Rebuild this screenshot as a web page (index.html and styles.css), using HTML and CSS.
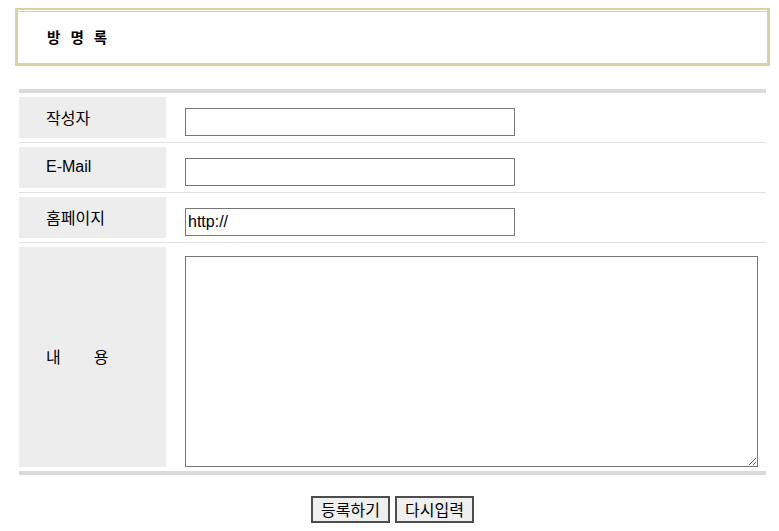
FILE: index.html
```html
<!DOCTYPE html>
<html lang="ko">
<head>
<meta charset="utf-8">
<title>방명록</title>
<link rel="stylesheet" href="styles.css">
</head>
<body>
<div class="header">
  <div class="header-in">
    <h1 class="title">방 명 록</h1>
  </div>
</div>
<form class="form">
  <div class="bar"></div>
  <div class="rows">
    <div class="row">
      <div class="label">작성자</div>
      <div class="field"><input class="text" type="text"></div>
    </div>
    <div class="sep"></div>
    <div class="row">
      <div class="label">E-Mail</div>
      <div class="field"><input class="text" type="text"></div>
    </div>
    <div class="sep"></div>
    <div class="row">
      <div class="label">홈페이지</div>
      <div class="field"><input class="text" type="text" value="http://"></div>
    </div>
    <div class="sep"></div>
    <div class="row row-tall">
      <div class="label"><span class="gap">내</span>용</div>
      <div class="field field-tall"><textarea class="area"></textarea></div>
    </div>
  </div>
  <div class="bar"></div>
  <div class="buttons">
    <button type="submit" class="btn">등록하기</button>
    <button type="reset" class="btn">다시입력</button>
  </div>
</form>
</body>
</html>
```
FILE: styles.css
```css
html, body {
  background: #fff;
}
body {
  margin: 8px;
  font-family: "Liberation Sans", "Noto Sans CJK KR", sans-serif;
  font-size: 16px;
  color: #000;
  overflow: hidden;
}
.header {
  margin: 0 1px 0 7px;
  height: 58px;
  box-sizing: border-box;
  border: 3px solid #d7d3a2;
  border-top-width: 2px;
}
.header-in {
  margin-top: 1px;
  border-top: 1px solid #d7d3a2;
  height: 51px;
  box-sizing: border-box;
  display: flex;
  align-items: center;
  padding-left: 29px;
  padding-bottom: 2px;
}
.title {
  margin: 0;
  font-family: "Noto Sans CJK KR", sans-serif;
  font-size: 14.5px;
  font-weight: bold;
  word-spacing: 6px;
  color: #000;
}
.form {
  margin: 23px 0 0 11px;
  width: 747px;
}
.bar {
  height: 4px;
  background: #dadada;
}
.rows {
  padding: 4px 0;
}
.row {
  display: flex;
  height: 41px;
}
.row-tall {
  height: 220px;
}
.sep {
  height: 1px;
  background: #e2e2e2;
  margin: 4px 0;
}
.label {
  width: 147px;
  box-sizing: border-box;
  background: #ededed;
  padding-left: 27px;
  display: flex;
  align-items: center;
  padding-bottom: 2px;
}
.gap {
  margin-right: 33px;
}
.field {
  padding-left: 19px;
  padding-top: 11px;
}
.field-tall {
  padding-top: 9px;
}
.text {
  width: 330px;
  height: 28px;
  box-sizing: border-box;
  border: 1px solid #767676;
  padding: 1px 2px;
  margin: 0;
  font-family: "Liberation Sans", "Noto Sans CJK KR", sans-serif;
  font-size: 16px;
}
.area {
  display: block;
  width: 573px;
  height: 211px;
  box-sizing: border-box;
  border: 1px solid #767676;
  margin: 0;
  padding: 2px;
  font-family: "Liberation Sans", "Noto Sans CJK KR", sans-serif;
  font-size: 16px;
}
.buttons {
  display: flex;
  justify-content: center;
  gap: 5px;
  margin-top: 21px;
}
.btn {
  width: 79px;
  height: 27px;
  box-sizing: border-box;
  border: 2px solid #4d4d4d;
  border-radius: 0;
  background: #efefef;
  padding: 0;
  margin: 0;
  font-family: "Noto Sans CJK KR", sans-serif;
  font-size: 16px;
  line-height: 21px;
  color: #000;
}
```
